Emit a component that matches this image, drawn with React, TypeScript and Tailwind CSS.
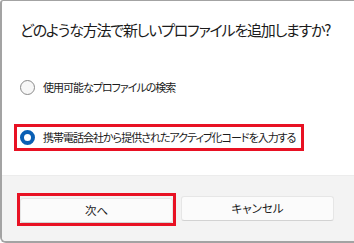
const jp = "[font-family:'Noto_Sans_CJK_JP','Noto_Sans',sans-serif] [font-feature-settings:'palt']";

function Radio({ checked }: { checked?: boolean }) {
  return checked ? (
    <span className="w-[15px] h-[15px] rounded-full border-[4px] border-[#0a5fb4] bg-white shrink-0" />
  ) : (
    <span className="w-[15px] h-[15px] rounded-full border border-[#8a8a8a] bg-[#f7f7f7] shrink-0" />
  );
}

export default function App() {
  return (
    <div className={`w-[354px] h-[243px] bg-white ${jp} text-[#1b1b1b] flex flex-col border-l-2 border-t border-b-2 border-[#a3a3a3] rounded-tl-[3px] rounded-bl-[6px] overflow-hidden`}>
      <div className="flex-1 flex flex-col px-[12px]">
        <h1 className="text-[15px] leading-[20px] mt-[19px] pl-[6px] tracking-[-1.2px] whitespace-nowrap">
          どのような方法で新しいプロファイルを追加しますか?
        </h1>
        <div className="flex items-center gap-[8px] mt-[37px] pl-[6px] h-[20px]">
          <Radio />
          <span className="text-[11px] tracking-[-1px] whitespace-nowrap">使用可能なプロファイルの検索</span>
        </div>
        <div className="mt-[27px] w-[290px] h-[27px] border-[3px] border-[#e81123] flex items-center gap-[8px] pl-[3px]">
          <Radio checked />
          <span className="text-[11px] tracking-[-1px] whitespace-nowrap">携帯電話会社から提供されたアクティブ化コードを入力する</span>
        </div>
      </div>
      <div className="h-[66px] bg-[#f3f3f3] border-t border-[#ececec] flex items-start gap-[5px] pl-[15px] pt-[17px]">
        <div className="border-[3px] border-[#e81123]">
          <button className="w-[153px] h-[25px] rounded-[3px] bg-[#fbfbfb] border border-[#e6e6e6] border-b-[#d2d2d2] text-[11.5px] text-[#1b1b1b]">
            次へ
          </button>
        </div>
        <button className="mt-[3px] w-[153px] h-[25px] rounded-[3px] bg-[#fbfbfb] border border-[#e6e6e6] border-b-[#d2d2d2] text-[11.5px] text-[#1b1b1b]">
          キャンセル
        </button>
      </div>
    </div>
  );
}
